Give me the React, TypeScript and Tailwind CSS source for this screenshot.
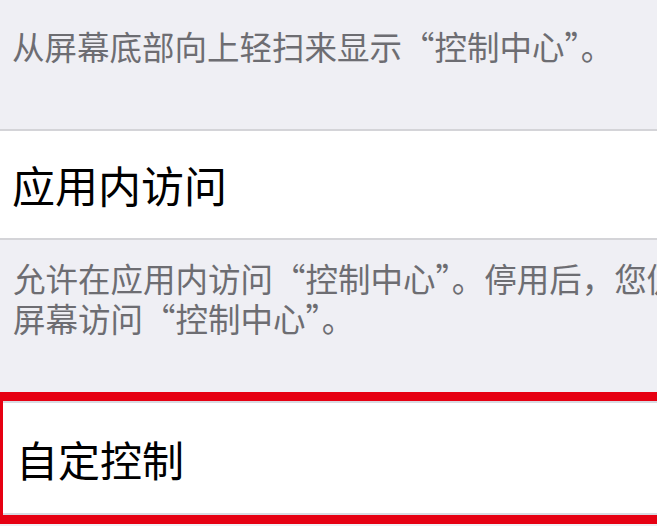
import React from 'react';

const font = { fontFamily: '"Noto Sans CJK SC", "Noto Sans", sans-serif' };

const App: React.FC = () => {
  return (
    <div className="w-[657px] h-[526px] overflow-hidden bg-[#efeff4]" style={font}>
      {/* footer of the previous group */}
      <div className="h-[129px] pl-[12px] pt-[25px] text-[32.5px] leading-[42px] text-[#6d6d72] whitespace-nowrap">
        从屏幕底部向上轻扫来显示“控制中心”。
      </div>

      <div className="h-[111px] bg-white border-y-2 border-[#d4d4d8] flex items-center pl-[12px] text-[43px] text-black whitespace-nowrap">
        应用内访问
      </div>

      <div className="h-[152px] pl-[13px] pt-[18px] text-[32.5px] leading-[40px] text-[#6d6d72] whitespace-nowrap overflow-hidden">
        <div>允许在应用内访问“控制中心”。停用后，您仍可以从主</div>
        <div>屏幕访问“控制中心”。</div>
      </div>

      {/* highlighted row */}
      <div className="h-[132px] border-t-[9px] border-b-[9px] border-l-[3px] border-[#e60012]">
        <div className="h-full bg-white border-y-2 border-[#d8dbe2] flex items-center pl-[13px] text-[42px] text-black whitespace-nowrap">
          自定控制
        </div>
      </div>
    </div>
  );
};

export default App;
